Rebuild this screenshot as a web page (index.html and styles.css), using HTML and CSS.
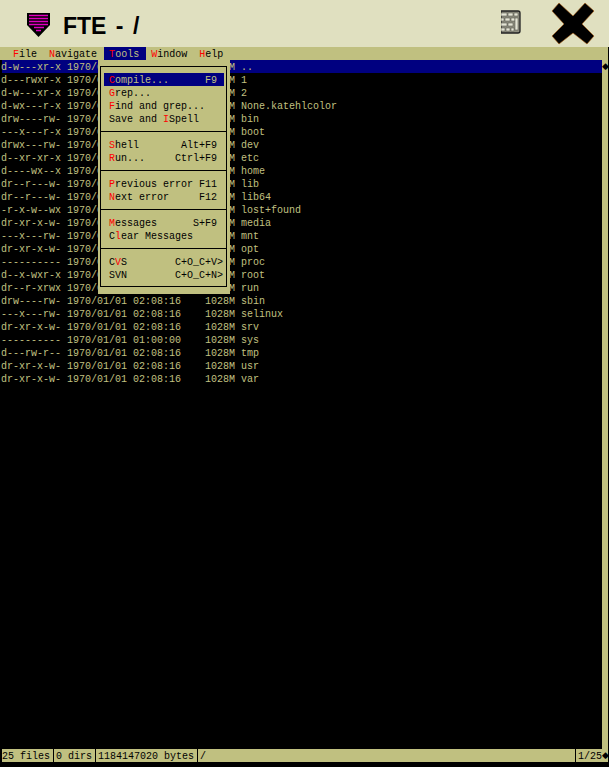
FILE: index.html
```html
<!DOCTYPE html>
<html lang="en">
<head>
<meta charset="utf-8">
<title>FTE - /</title>
<link rel="stylesheet" href="styles.css">
</head>
<body>
<div class="window">
  <header class="titlebar">
    <svg class="app-icon" width="23" height="24" viewBox="0 0 23 24">
      <path d="M0 0H23V12L11.5 24L0 12Z" fill="#000"/>
      <path d="M2 2.5H21M2 5.5H21M2 8.5H21M2 11.5H21M7 14.5H17M9 17.5H14" stroke="#e000c0" stroke-width="1.4"/>
    </svg>
    <h1 class="title">FTE - /</h1>
    <svg class="brick-icon" width="20" height="24" viewBox="0 0 20 24">
      <path d="M0 1H17Q19 1 19 3V21Q19 23 17 23H0Z" fill="#8f8f80" stroke="#222" stroke-width="1.3"/>
      <g fill="#e4e4d4" stroke="#5a5a50" stroke-width=".6">
        <rect x="0" y="3" width="6" height="3"/><rect x="7" y="3" width="5" height="3"/><rect x="13" y="3" width="4" height="3"/>
        <rect x="0" y="8" width="3" height="3"/><rect x="4" y="8" width="5" height="3"/><rect x="10" y="8" width="4" height="3"/>
        <rect x="0" y="13" width="6" height="3"/><rect x="7" y="13" width="5" height="3"/><rect x="14" y="8" width="3" height="12"/>
        <rect x="0" y="18" width="4" height="3"/><rect x="5" y="18" width="4" height="3"/><rect x="10" y="18" width="3" height="3"/>
      </g>
    </svg>
    <svg class="close-icon" width="44" height="43" viewBox="0 0 44 43">
      <path d="M8 1L22 14L34 1L43 9L31 22L43 34L36 42L22 31L8 42L1 34L13 22L1 9Z" fill="#000" stroke="#a85a10" stroke-width=".6"/>
    </svg>
  </header>

  <nav class="menubar"><span class="mi">  <b>F</b>ile </span><span class="mi"> <b>N</b>avigate </span><span class="mi on"> <b>T</b>ools </span><span class="mi"> <b>W</b>indow </span><span class="mi"> <b>H</b>elp </span></nav>

  <main class="panes">
    <div class="list">
      <div class="row current">d-w---xr-x 1970/01/01 02:08:16    1028M ..</div>
      <div class="row">d---rwxr-x 1970/01/01 02:08:16    1028M 1</div>
      <div class="row">d-w---xr-x 1970/01/01 02:08:16    1028M 2</div>
      <div class="row">d-wx---r-x 1970/01/01 02:08:16    1028M None.katehlcolor</div>
      <div class="row">drw----rw- 1970/01/01 02:08:16    1028M bin</div>
      <div class="row">---x---r-x 1970/01/01 02:08:16    1028M boot</div>
      <div class="row">drwx---rw- 1970/01/01 02:08:16    1028M dev</div>
      <div class="row">d--xr-xr-x 1970/01/01 02:08:16    1028M etc</div>
      <div class="row">d----wx--x 1970/01/01 02:08:16    1028M home</div>
      <div class="row">dr--r---w- 1970/01/01 02:08:16    1028M lib</div>
      <div class="row">dr--r---w- 1970/01/01 02:08:16    1028M lib64</div>
      <div class="row">-r-x-w--wx 1970/01/01 02:08:16    1028M lost+found</div>
      <div class="row">dr-xr-x-w- 1970/01/01 02:08:16    1028M media</div>
      <div class="row">---x---rw- 1970/01/01 02:08:16    1028M mnt</div>
      <div class="row">dr-xr-x-w- 1970/01/01 02:08:16    1028M opt</div>
      <div class="row">---------- 1970/01/01 01:00:00    1028M proc</div>
      <div class="row">d--x-wxr-x 1970/01/01 02:08:16    1028M root</div>
      <div class="row">dr--r-xrwx 1970/01/01 02:08:16    1028M run</div>
      <div class="row">drw----rw- 1970/01/01 02:08:16    1028M sbin</div>
      <div class="row">---x---rw- 1970/01/01 02:08:16    1028M selinux</div>
      <div class="row">dr-xr-x-w- 1970/01/01 02:08:16    1028M srv</div>
      <div class="row">---------- 1970/01/01 01:00:00    1028M sys</div>
      <div class="row">d---rw-r-- 1970/01/01 02:08:16    1028M tmp</div>
      <div class="row">dr-xr-x-w- 1970/01/01 02:08:16    1028M usr</div>
      <div class="row">dr-xr-x-w- 1970/01/01 02:08:16    1028M var</div>
    </div>
    <div class="scroll"><span class="diamond">◆</span></div>

    <div class="menu">
      <div class="menu-box">
        <div class="item on"><span><b>C</b>ompile...</span><span>F9</span></div>
        <div class="item"><span><b>G</b>rep...</span></div>
        <div class="item"><span><b>F</b>ind and grep...</span></div>
        <div class="item"><span>Save and <b>I</b>Spell</span></div>
        <div class="sep"></div>
        <div class="item"><span><b>S</b>hell</span><span>Alt+F9</span></div>
        <div class="item"><span><b>R</b>un...</span><span>Ctrl+F9</span></div>
        <div class="sep"></div>
        <div class="item"><span><b>P</b>revious error</span><span>F11</span></div>
        <div class="item"><span><b>N</b>ext error</span><span>F12</span></div>
        <div class="sep"></div>
        <div class="item"><span><b>M</b>essages</span><span>S+F9</span></div>
        <div class="item"><span>C<b>l</b>ear Messages</span></div>
        <div class="sep"></div>
        <div class="item sub"><span>C<b>V</b>S</span><span>C+O_C+V&gt;</span></div>
        <div class="item sub"><span>SVN</span><span>C+O_C+N&gt;</span></div>
      </div>
    </div>
  </main>

  <footer class="status">
    <span class="cell w8">25 files</span><i class="bar"></i>
    <span class="cell w6">0 dirs</span><i class="bar"></i>
    <span class="cell w16">1184147020 bytes</span><i class="bar"></i>
    <span class="cell grow">/</span><i class="bar"></i>
    <span class="cell w4">1/25</span><span class="diamond">◆</span>
  </footer>
</div>
</body>
</html>
```
FILE: styles.css
```css
* { box-sizing: border-box; }
html, body { margin: 0; padding: 0; background: #fff; }
.window {
  width: 609px;
  height: 767px;
  display: flex;
  flex-direction: column;
  background: #000;
  font: 10px/15px "Liberation Mono", monospace;
  overflow: hidden;
}
.mi, .row, .item span, .cell { white-space: pre; }
.titlebar {
  height: 47px;
  flex: none;
  display: flex;
  align-items: flex-start;
  background: #e0e0c0;
  padding: 13px 0 0 27px;
}
.app-icon { flex: none; }
.title {
  margin: -2px auto 0 13px;
  font: bold 23px/30px "Liberation Sans", sans-serif;
  word-spacing: 3px;
  color: #000;
}
.brick-icon { flex: none; margin: -3px 30px 0 0; }
.close-icon { flex: none; margin: -11px 14px 0 0; }
.menubar {
  height: 13px;
  flex: none;
  display: flex;
  background: #c0c080;
  padding-left: 2px;
  margin-right: 1px;
  color: #000;
}
.mi { text-indent: -1px; padding-right: 1px; }
.mi b, .item b { font-weight: normal; color: #f00; }
.mi.on { background: #000080; color: #c0c080; }
.panes {
  position: relative;
  flex: none;
  height: 689px;
  display: flex;
  padding-left: 2px;
}
.list { width: 600px; color: #c0c080; }
.row { height: 13px; text-indent: -1px; }
.row.current { background: #000080; }
.scroll {
  width: 6px;
  background: #c0c080;
  color: #000;
}
.diamond {
  display: block;
  width: 6px;
  font: 9px/13px "DejaVu Sans", sans-serif;
  text-align: center;
  color: #000;
  overflow: hidden;
}
.menu {
  position: absolute;
  left: 98px;
  top: 0;
  width: 132px;
  height: 234px;
  background: #c0c080;
  padding: 6px 3px 7px 2px;
  color: #000;
}
.menu-box {
  height: 221px;
  border: 1px solid #000;
  padding-top: 6px;
}
.item {
  height: 13px;
  margin: 0 2px 0 3px;
  padding: 0 7px 0 5px;
  display: flex;
  justify-content: space-between;
}
.item.on { background: #000080; color: #c0c080; }
.item.sub { padding-right: 1px; }
.sep { height: 1px; margin: 6px 0; background: #000; }
.status {
  height: 13px;
  flex: none;
  display: flex;
  margin: 0 1px 0 2px;
  background: #c0c080;
  color: #000;
}
.cell { flex: none; }
.w8 { width: 48px; }
.w6 { width: 36px; }
.w16 { width: 96px; }
.w4 { width: 24px; }
.cell.grow { flex: 1; }
.bar { flex: none; width: 1px; margin: 0 2px 0 3px; background: #000; }
```
